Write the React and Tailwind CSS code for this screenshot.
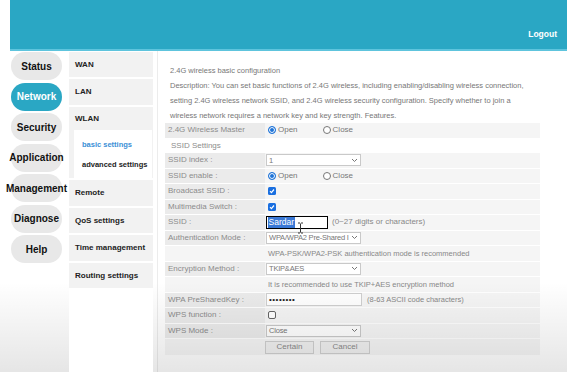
import React from "react";

const Chevron = () => (
  <svg width="7" height="5" viewBox="0 0 7 5" className="shrink-0">
    <path d="M1 1 L3.5 3.5 L6 1" fill="none" stroke="#777" strokeWidth="1" />
  </svg>
);

const Select = ({ text }) => (
  <div className="ml-[1px] w-[95px] h-[12px] border border-[#c9c9c9] bg-white flex items-center justify-between pl-[2px] pr-[2px] text-[7.5px] text-[#777] leading-none whitespace-nowrap">
    <span className="tracking-[-0.2px]">{text}</span>
    <Chevron />
  </div>
);

const Radio = ({ on, label }) => (
  <div className="flex items-center gap-[2px] text-[8px] text-[#777]">
    {on ? (
      <span className="w-[8px] h-[8px] rounded-full bg-[#1f74d8] border border-[#1f74d8] shadow-[inset_0_0_0_1px_white] block" />
    ) : (
      <span className="w-[8px] h-[8px] rounded-full bg-white border border-[#777] block" />
    )}
    <span>{label}</span>
  </div>
);

const Check = ({ on }) =>
  on ? (
    <span className="ml-[3px] w-[8px] h-[8px] rounded-[1.5px] bg-[#1a6fe0] flex items-center justify-center">
      <svg width="6" height="6" viewBox="0 0 6 6">
        <path d="M1 3.2 L2.4 4.6 L5 1.5" fill="none" stroke="white" strokeWidth="1.2" />
      </svg>
    </span>
  ) : (
    <span className="ml-[3px] w-[8px] h-[8px] rounded-[2px] bg-white border border-[#666] block" />
  );

const Row = ({ label, children, plain }) => (
  <div className="flex h-[15.5px] border-b border-white">
    <div
      className={`w-[100px] shrink-0 pl-[3px] flex items-center text-[8px] text-[#8c8c8c] whitespace-nowrap ${
        plain ? "bg-[#f5f5f5]" : "bg-[#ebebeb]"
      }`}
    >
      {label}
    </div>
    <div className="flex-1 bg-[#f5f5f5] flex items-center">{children}</div>
  </div>
);

const Pill = ({ children, active }) => (
  <div
    className={`h-[28px] rounded-full flex items-center justify-center text-[10px] font-bold whitespace-nowrap ${
      active ? "bg-[#2aa7c4] text-white" : "bg-[#e8e8e8] text-[#111]"
    }`}
  >
    {children}
  </div>
);

const SubItem = ({ children, h = "h-[26px]" }) => (
  <div className={`${h} bg-[#f2f2f2] flex items-center pl-[6px] text-[8px] font-bold text-[#222] whitespace-nowrap`}>
    {children}
  </div>
);

export default function App() {
  return (
    <div className="relative w-[567px] h-[372px] overflow-hidden bg-white font-['Liberation_Sans',Arial,sans-serif]">
      <header className="ml-[10px] h-[51px] bg-[#2aa7c4] border-b-2 border-[#5ec4dd] flex items-end justify-end pr-[10px] pb-[8px]">
        <span className="text-white text-[8.5px] font-bold">Logout</span>
      </header>

      <div className="flex">
        <nav className="ml-[11px] w-[51px] shrink-0 pt-[1px] flex flex-col gap-[2.5px]">
          <Pill>Status</Pill>
          <Pill active>Network</Pill>
          <Pill>Security</Pill>
          <Pill>Application</Pill>
          <Pill>Management</Pill>
          <Pill>Diagnose</Pill>
          <Pill>Help</Pill>
        </nav>

        <div className="ml-[7px] w-[84px] shrink-0 relative z-10 bg-white pt-[1px] flex flex-col gap-[2px]">
          <SubItem h="h-[25px]">WAN</SubItem>
          <SubItem>LAN</SubItem>
          <div className="bg-[#f2f2f2] h-[71px] flex flex-col">
            <div className="h-[23px] flex items-center pl-[6px] text-[8px] font-bold text-[#222]">WLAN</div>
            <div className="ml-[5px] mr-[1px] flex-1 bg-white flex flex-col text-[7.5px] font-bold whitespace-nowrap">
              <div className="h-[25px] pt-[4px] flex items-center pl-[8px] text-[#3a8fd6]">basic settings</div>
              <div className="h-[20px] flex items-center pl-[8px] text-[#222]">advanced settings</div>
            </div>
          </div>
          <SubItem>Remote</SubItem>
          <SubItem h="h-[25px]">QoS settings</SubItem>
          <SubItem>Time management</SubItem>
          <SubItem h="h-[25px]">Routing settings</SubItem>
        </div>

        <main className="ml-[4px] flex-1 border-l border-[#ececec] pt-[11.5px] h-[321px]">
          <div className="pl-[12px] pr-[30px] text-[7.5px] leading-[15px] text-[#777]">
            <div>2.4G wireless basic configuration</div>
            <div>
              Description: You can set basic functions of 2.4G wireless, including enabling/disabling wireless connection,
              setting 2.4G wireless network SSID, and 2.4G wireless security configuration. Specify whether to join a
              wireless network requires a network key and key strength. Features.
            </div>
          </div>

          <div className="ml-[7px] w-[375px]">
            <div className="flex h-[15.5px]">
              <div className="w-[100px] shrink-0 pl-[3px] flex items-center text-[8px] text-[#8c8c8c] bg-[#ebebeb]">
                2.4G Wireless Master
              </div>
              <div className="flex-1 bg-[#f5f5f5] flex items-center pl-[3px] gap-[25px]">
                <Radio on label="Open" />
                <Radio label="Close" />
              </div>
            </div>
            <div className="h-[15px] flex items-center pl-[6px] text-[8px] text-[#8c8c8c]">SSID Settings</div>

            <Row label="SSID index :">
              <Select text="1" />
            </Row>
            <Row label="SSID enable :">
              <div className="flex items-center pl-[3px] gap-[25px]">
                <Radio on label="Open" />
                <Radio label="Close" />
              </div>
            </Row>
            <Row label="Broadcast SSID :">
              <Check on />
            </Row>
            <Row label="Multimedia Switch :">
              <Check on />
            </Row>
            <Row label="SSID :">
              <div className="ml-[1px] w-[62px] h-[13px] border-[1.5px] border-black bg-white flex items-center pl-[1px] text-[8.5px] leading-none">
                <span className="bg-[#3a78d6] text-white px-[0.5px] py-[1px]">Sardar</span>
              </div>
              <span className="ml-[4px] text-[8px] text-[#888] whitespace-nowrap">(0~27 digits or characters)</span>
            </Row>
            <Row label="Authentication Mode :">
              <Select text="WPA/WPA2 Pre-Shared I" />
            </Row>
            <Row label="" plain>
              <span className="pl-[3px] text-[7.5px] text-[#888] whitespace-nowrap">
                WPA-PSK/WPA2-PSK authentication mode is recommended
              </span>
            </Row>
            <Row label="Encryption Method :">
              <Select text="TKIP&AES" />
            </Row>
            <Row label="" plain>
              <span className="pl-[3px] text-[7.5px] text-[#888] whitespace-nowrap">
                It is recommended to use TKIP+AES encryption method
              </span>
            </Row>
            <Row label="WPA PreSharedKey :">
              <div className="ml-[1px] w-[96px] h-[13px] border border-[#cfcfcf] bg-white flex items-center pl-[2px] text-[8px] leading-none text-[#222] tracking-[0.5px]">
                ••••••••
              </div>
              <span className="ml-[5px] text-[7.5px] text-[#888] whitespace-nowrap">(8-63 ASCII code characters)</span>
            </Row>
            <Row label="WPS function :">
              <Check />
            </Row>
            <Row label="WPS Mode :">
              <Select text="Close" />
            </Row>
            <div className="flex h-[16px] bg-[#f5f5f5] items-center pl-[100px] gap-[6px]">
              <button className="w-[49px] h-[13px] border border-[#cfcfcf] bg-[#f0f0f0] text-[8px] text-[#888] leading-none">
                Certain
              </button>
              <button className="w-[50px] h-[13px] border border-[#cfcfcf] bg-[#f0f0f0] text-[8px] text-[#888] leading-none">
                Cancel
              </button>
            </div>
          </div>
        </main>
      </div>

      <svg className="absolute left-[297px] top-[222px] pointer-events-none" width="7" height="12" viewBox="0 0 7 12">
        <path d="M1 1 H3 M4 1 H6 M3.5 1.5 V10.5 M1 11 H3 M4 11 H6" fill="none" stroke="#333" strokeWidth="1" />
      </svg>

      <div className="absolute inset-x-0 bottom-0 h-[90px] bg-linear-to-b from-transparent to-black/10 pointer-events-none" />
    </div>
  );
}
